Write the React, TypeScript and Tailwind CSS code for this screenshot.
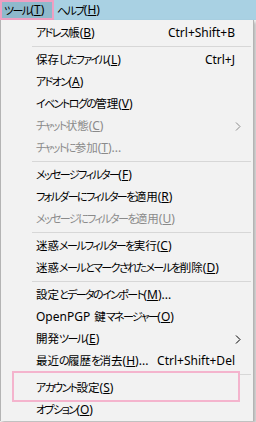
import { Fragment } from 'react'

type Item =
  | { sep: true }
  | {
      sep?: false
      pre?: string
      label: string
      key: string
      tail?: string
      shortcut?: string
      sub?: boolean
      disabled?: boolean
      boxed?: boolean
    }

const items: Item[] = [
  { label: 'アドレス帳', key: 'B', shortcut: 'Ctrl+Shift+B' },
  { sep: true },
  { label: '保存したファイル', key: 'L', shortcut: 'Ctrl+J' },
  { label: 'アドオン', key: 'A' },
  { label: 'イベントログの管理', key: 'V' },
  { label: 'チャット状態', key: 'C', sub: true, disabled: true },
  { label: 'チャットに参加', key: 'T', tail: '...', disabled: true },
  { sep: true },
  { label: 'メッセージフィルター', key: 'F' },
  { label: 'フォルダーにフィルターを適用', key: 'R' },
  { label: 'メッセージにフィルターを適用', key: 'U', disabled: true },
  { sep: true },
  { label: '迷惑メールフィルターを実行', key: 'C' },
  { label: '迷惑メールとマークされたメールを削除', key: 'D' },
  { sep: true },
  { label: '設定とデータのインポート', key: 'M', tail: '...' },
  { pre: 'OpenPGP ', label: '鍵マネージャー', key: 'O' },
  { label: '開発ツール', key: 'E', sub: true },
  { label: '最近の履歴を消去', key: 'H', tail: '...', shortcut: 'Ctrl+Shift+Del' },
  { sep: true },
  { label: 'アカウント設定', key: 'S', boxed: true },
  { label: 'オプション', key: 'O' },
]

function Chevron() {
  return (
    <svg width="6" height="9" viewBox="0 0 6 9" className="absolute right-[12px] top-[7px]">
      <path d="M1 0.5 L5 4.5 L1 8.5" fill="none" stroke="currentColor" strokeWidth="1" />
    </svg>
  )
}

// kanji keep their full width, kana get squeezed (Yu Gothic UI look)
function Jp({ children }: { children: string }) {
  const parts = children.split(/([\u3400-\u9fff々]+)/).filter(Boolean)
  return (
    <>
      {parts.map((p, i) =>
        /[\u3400-\u9fff]/.test(p) ? (
          <span key={i} className="text-[11.5px]">
            {p}
          </span>
        ) : (
          <span key={i} className="text-[11px] tracking-[-1.6px]">
            {p}
          </span>
        ),
      )}
    </>
  )
}

export default function App() {
  return (
    <div className="w-[256px] h-[422px] overflow-hidden bg-[#f4f4f4] text-[12px] leading-none text-black [font-family:'Noto_Sans','Noto_Sans_CJK_JP',sans-serif] [font-feature-settings:'palt']">
      <div className="flex h-[20px] bg-[#a9d1e3]">
        <div className="flex items-center h-[20px] w-[54px] pl-[2px] bg-[#8fb9cc] border-2 border-[#ef9fc2] whitespace-nowrap">
          <Jp>ツール</Jp>(<u>T</u>)
        </div>
        <div className="flex items-center h-[20px] pl-[3px] whitespace-nowrap">
          <Jp>ヘルプ</Jp>(<u>H</u>)
        </div>
      </div>

      <div className="relative w-[254px] bg-[#f2f2f2] border-l border-r border-[#b4b4b4] pt-[2px] shadow-[2px_2px_3px_rgba(0,0,0,0.25)]">
        {items.map((it, i) =>
          it.sep ? (
            <div key={i} className="h-[5px] flex items-center pl-[31px] pr-[2px]">
              <div className="h-px w-full bg-[#d7d7d7]" />
            </div>
          ) : (
            <Fragment key={i}>
              <div
                className={`relative h-[22px] flex items-center pl-[35px] pr-[18px] ${
                  it.disabled ? 'text-[#8a8a8a]' : 'text-black'
                } ${it.boxed ? 'z-10' : ''}`}
              >
                {it.boxed && (
                  <div className="absolute left-[11px] top-[-6px] w-[228px] h-[31px] border-2 border-[#f4b4cd] bg-[#f2f2f2] -z-10" />
                )}
                <span className="whitespace-nowrap">
                  {it.pre && <span className="mr-[1px]">{it.pre}</span>}
                  <Jp>{it.label}</Jp>(<u>{it.key}</u>){it.tail}
                </span>
                {it.shortcut && <span className="ml-auto whitespace-nowrap">{it.shortcut}</span>}
                {it.sub && <Chevron />}
              </div>
            </Fragment>
          ),
        )}
      </div>
    </div>
  )
}
